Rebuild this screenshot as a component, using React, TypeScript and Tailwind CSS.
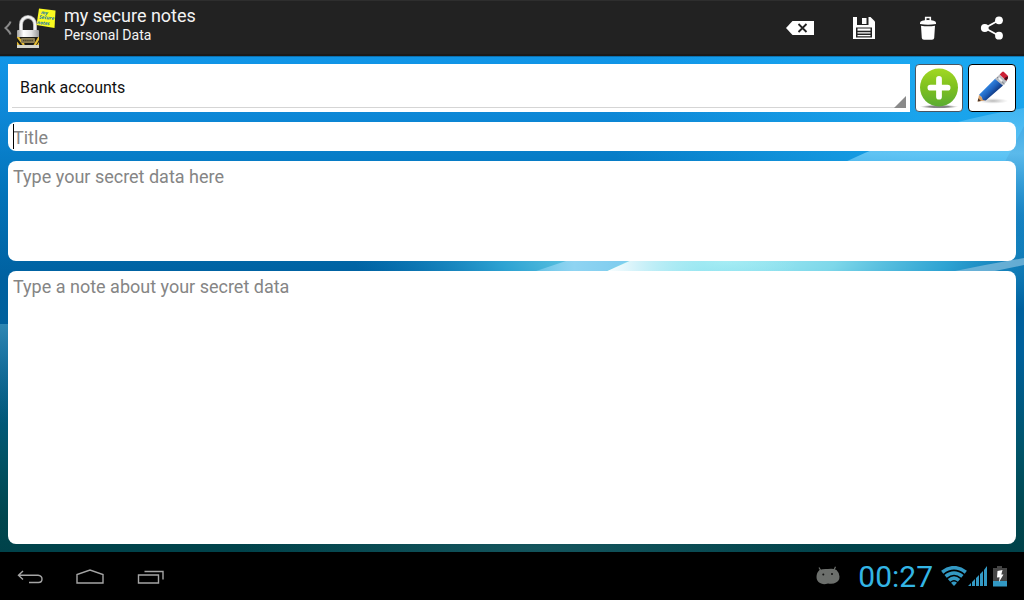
import { useState } from 'react';

const CATEGORIES = ['Bank accounts'];

function Wallpaper() {
  return (
    <svg
      className="absolute inset-0 w-full h-full"
      viewBox="0 0 1024 496"
      preserveAspectRatio="none"
      aria-hidden="true"
    >
      <defs>
        <linearGradient id="sky" x1="0" y1="0" x2="0" y2="1">
          <stop offset="0" stopColor="#1196e8" />
          <stop offset="0.12" stopColor="#0d87d6" />
          <stop offset="0.28" stopColor="#0273b9" />
          <stop offset="0.45" stopColor="#0061a0" />
          <stop offset="0.6" stopColor="#00609a" />
          <stop offset="0.8" stopColor="#015468" />
          <stop offset="0.93" stopColor="#01464e" />
          <stop offset="1" stopColor="#00424a" />
        </linearGradient>
        <radialGradient id="glow" gradientUnits="userSpaceOnUse" cx="0" cy="0" r="1" gradientTransform="translate(725 205) scale(370 80)">
          <stop offset="0" stopColor="#a8eef5" />
          <stop offset="0.3" stopColor="#8be4f1" stopOpacity="0.9" />
          <stop offset="0.6" stopColor="#3db8e2" stopOpacity="0.75" />
          <stop offset="1" stopColor="#1a90cc" stopOpacity="0" />
        </radialGradient>
        <linearGradient id="ray" x1="0" y1="0" x2="1" y2="0">
          <stop offset="0" stopColor="#fff" />
          <stop offset="0.15" stopColor="#d6f3fa" />
          <stop offset="0.5" stopColor="#a0eaf3" stopOpacity="0.5" />
          <stop offset="1" stopColor="#a0eaf3" stopOpacity="0" />
        </linearGradient>
        <linearGradient id="streak" x1="0" y1="0" x2="1" y2="0">
          <stop offset="0" stopColor="#8fd4f2" stopOpacity="0.5" />
          <stop offset="0.4" stopColor="#8fd4f2" />
          <stop offset="1" stopColor="#7ccbee" />
        </linearGradient>
        <linearGradient id="beam" x1="0" y1="0" x2="0" y2="1">
          <stop offset="0" stopColor="#6fcaf8" stopOpacity="0.45" />
          <stop offset="0.3" stopColor="#7fd4fa" stopOpacity="0.7" />
          <stop offset="1" stopColor="#2f9bd8" stopOpacity="0" />
        </linearGradient>
        <linearGradient id="topRight" x1="0" y1="0" x2="1" y2="0">
          <stop offset="0.6" stopColor="#1fb0f5" stopOpacity="0" />
          <stop offset="0.9" stopColor="#1fb0f5" stopOpacity="0.7" />
        </linearGradient>
        <linearGradient id="leftHaze" x1="0" y1="0" x2="0" y2="1">
          <stop offset="0" stopColor="#3e94bb" stopOpacity="0.75" />
          <stop offset="1" stopColor="#26708a" stopOpacity="0" />
        </linearGradient>
        <radialGradient id="floor">
          <stop offset="0" stopColor="#15565e" />
          <stop offset="1" stopColor="#15565e" stopOpacity="0" />
        </radialGradient>
      </defs>
      <rect width="1024" height="496" fill="url(#sky)" />
      <path d="M0 0 H1024 V70 L1000 115 H0 Z" fill="url(#topRight)" />
      <ellipse cx="725" cy="205" rx="370" ry="80" fill="url(#glow)" />
      <path d="M536 215 L572 203 L632 203 L606 215 Z" fill="url(#streak)" />
      <path d="M605 216 L634 203 L800 203 L790 216 Z" fill="url(#ray)" />
      <path d="M845 106 Q920 70 1024 52 L1024 203 H845 Z" fill="url(#beam)" />
      <path d="M950 216 L985 209 L1024 202 L1024 209 L990 216 Z" fill="#82bcdc" opacity="0.75" />
      <rect y="268" width="8" height="100" fill="url(#leftHaze)" />
      <rect width="1024" height="1" fill="#08588c" opacity="0.6" />
      <ellipse cx="540" cy="492" rx="300" ry="20" fill="url(#floor)" />
    </svg>
  );
}

function AppLogo() {
  return (
    <svg className="w-10 h-10" viewBox="0 0 40 40" aria-hidden="true">
      <defs>
        <linearGradient id="steel" x1="0" y1="0" x2="1" y2="0">
          <stop offset="0" stopColor="#a0a0a0" />
          <stop offset="0.3" stopColor="#ffffff" />
          <stop offset="0.65" stopColor="#e2e2e2" />
          <stop offset="1" stopColor="#999999" />
        </linearGradient>
        <clipPath id="plate">
          <rect x="1" y="29" width="22" height="8" />
        </clipPath>
      </defs>
      <path d="M5 23 V16.500 A7 7.600 0 0 1 19 16.500 V23" fill="none" stroke="#a8a8a8" strokeWidth="4" />
      <path d="M5 23 V16.500 A7 7.600 0 0 1 19 16.500 V23" fill="none" stroke="#f4f4f4" strokeWidth="2.400" />
      <rect x="1" y="22" width="22" height="18" rx="1" fill="url(#steel)" />
      <rect x="1" y="29" width="22" height="8" fill="#1b1a15" />
      <g clipPath="url(#plate)" stroke="#e3bc35" strokeWidth="2.2">
        <path d="M0 34 L5 40 M1 28 L8 37 M17 40 L24 28 M20 40 L25 33" />
      </g>
      <rect x="5" y="30" width="14" height="5" rx="1" fill="#8b7d52" />
      <path d="M7 32.5 H17" stroke="#4c4530" strokeWidth="1.6" strokeDasharray="1.5 0.6" />
      <rect x="1" y="37" width="22" height="3" fill="#d6d6cc" />
      <path d="M23 0.5 L39.500 2.500 L38.500 20 L20.500 17 Z" fill="#fbfb20" />
      <g
        fill="#1675a8"
        fontFamily="'Open Sans', sans-serif"
        fontWeight="bold"
        fontStyle="italic"
        fontSize="4.800"
      >
        <text x="25" y="6" transform="rotate(6 25 6)">my</text>
        <text x="23" y="10.500" transform="rotate(6 23 10.5)">Secure</text>
        <text x="21" y="16" transform="rotate(6 21 16)">notes</text>
      </g>
    </svg>
  );
}

const actions = [
  {
    label: 'Clear',
    icon: (
      <>
        <path d="M2 16 L8.500 9 H30 V23 H8.500 Z" fill="#fff" />
        <path d="M14.500 12 L22.500 20 M22.500 12 L14.500 20" stroke="#222" strokeWidth="1.800" />
      </>
    ),
  },
  {
    label: 'Save',
    icon: (
      <>
        <path d="M5 5 H22.500 L27 9.500 V27 H5 Z" fill="#fff" />
        <path d="M9 5 H20.500 V13 H9 Z" fill="#222" />
        <path d="M14 6 H18.500 V12 H14 Z" fill="#fff" />
        <path d="M8 15.500 H24 V25.500 H8 Z" fill="#222" />
        <path d="M9.500 16.500 H22.500 V18.700 H9.500 Z" fill="#fff" />
        <path d="M9.500 20.800 H22.500 M9.500 23.600 H22.500" stroke="#fff" strokeWidth="1.200" />
      </>
    ),
  },
  {
    label: 'Delete',
    icon: (
      <>
        <path d="M13.700 9 V5.500 H18.300 V9" fill="none" stroke="#fff" strokeWidth="1.600" />
        <path d="M8 10.500 Q8.500 8 16 8 Q23.500 8 24 10.500 V12 Q16 13.500 8 12 Z" fill="#fff" />
        <path d="M9 13.700 Q16 15 23 13.700 L22.200 26 Q22 27.500 20 27.700 H12 Q10 27.500 9.800 26 Z" fill="#fff" />
      </>
    ),
  },
  {
    label: 'Share',
    icon: (
      <>
        <path d="M23 8.300 L8.800 16 L23 23.700" fill="none" stroke="#fff" strokeWidth="1.800" />
        <circle cx="23" cy="8.300" r="3.900" fill="#fff" />
        <circle cx="8.800" cy="16" r="3.900" fill="#fff" />
        <circle cx="23" cy="23.700" r="3.900" fill="#fff" />
      </>
    ),
  },
];

function ActionBar() {
  return (
    <header className="h-14 shrink-0 flex items-center justify-between bg-[#222222] border-t border-t-[#2e2e2e] border-b-2 border-b-[#1a1a1a]">
      <button aria-label="Navigate up" className="flex items-center h-full pl-1 gap-1">
        <svg className="w-2 h-4" viewBox="0 0 8 16" fill="none" stroke="#8a8a8a" strokeWidth="2">
          <path d="M6.500 1.500 Q6 4 1.500 8 Q6 12 6.500 14.500" />
        </svg>
        <AppLogo />
        <span className="flex flex-col pl-1 pb-1.5 text-left text-[#f3f3f3]">
          <span className="text-lg leading-5">my secure notes</span>
          <span className="text-sm leading-[18px]">Personal Data</span>
        </span>
      </button>
      <div className="flex h-full">
        {actions.map((action) => (
          <button key={action.label} aria-label={action.label} className="w-16 h-full flex items-center justify-center">
            <svg className="w-8 h-8" viewBox="0 0 32 32">{action.icon}</svg>
          </button>
        ))}
      </div>
    </header>
  );
}

function PlusIcon() {
  return (
    <svg className="w-full h-full" viewBox="0 0 48 48">
      <defs>
        <linearGradient id="green" x1="0" y1="0" x2="0" y2="1">
          <stop offset="0" stopColor="#a2d823" />
          <stop offset="0.5" stopColor="#7ec01f" />
          <stop offset="1" stopColor="#5aac32" />
        </linearGradient>
        <radialGradient id="plusShadow">
          <stop offset="0.5" stopColor="#777" stopOpacity="0.9" />
          <stop offset="1" stopColor="#999" stopOpacity="0" />
        </radialGradient>
      </defs>
      <ellipse cx="24" cy="43.500" rx="20" ry="2" fill="url(#plusShadow)" />
      <circle cx="24" cy="23.500" r="19.800" fill="url(#green)" />
      <path d="M24 14.500 V33 M15 23.700 H33" stroke="#fff" strokeWidth="6" strokeLinecap="round" />
    </svg>
  );
}

function PencilIcon() {
  return (
    <svg className="w-full h-full" viewBox="0 0 48 48">
      <defs>
        <linearGradient id="body" gradientUnits="userSpaceOnUse" x1="17" y1="25" x2="24" y2="32">
          <stop offset="0" stopColor="#2f80dc" />
          <stop offset="0.5" stopColor="#1f62bd" />
          <stop offset="1" stopColor="#123b85" />
        </linearGradient>
        <radialGradient id="pencilShadow">
          <stop offset="0" stopColor="#888" stopOpacity="0.6" />
          <stop offset="1" stopColor="#aaa" stopOpacity="0" />
        </radialGradient>
      </defs>
      <ellipse cx="25" cy="37.500" rx="16" ry="3" fill="url(#pencilShadow)" />
      <path d="M9 38 L10.500 31 L17 37 Z" fill="#d9a066" />
      <path d="M9 38 L9.700 34.800 L12.500 37.500 Z" fill="#4d3627" />
      <path d="M10.500 31 L27.500 14 L35.500 21.500 L17.500 37 L14.500 36.500 L13.300 33.500 Z" fill="url(#body)" />
      <path d="M27 14.500 L32 9.800 L39.500 17 L35.500 21.500 Z" fill="#b9bcc2" />
      <path d="M29.300 12.800 L37 19.800" stroke="#747880" strokeWidth="1" />
      <path d="M31 13.500 L34.500 17" stroke="#f4f4f4" strokeWidth="2" />
      <path d="M32 9.800 L34.500 7.300 Q35.500 6.500 36.500 7.300 L40.500 11.200 Q41.300 12.500 40.500 13.700 L39 16.500 Z" fill="#cc2036" />
      <path d="M38.500 12.500 L40.700 12 L40.500 14 L39 16.500 L36.500 14.500 Z" fill="#4a1220" />
    </svg>
  );
}

function CategoryRow() {
  const [category, setCategory] = useState(CATEGORIES[0]);

  return (
    <div className="flex gap-[5px] h-12 shrink-0">
      <div className="relative flex-1 bg-white">
        <select
          aria-label="Category"
          value={category}
          onChange={(e) => setCategory(e.target.value)}
          className="appearance-none w-full h-full pl-3 pr-5 bg-transparent text-base text-[#111] outline-none"
        >
          {CATEGORIES.map((name) => (
            <option key={name} value={name}>{name}</option>
          ))}
        </select>
        <span className="absolute left-1 right-1 bottom-1 h-px bg-[#d5d5d5] pointer-events-none" />
        <svg className="absolute right-1 bottom-1 w-3 h-3 pointer-events-none" viewBox="0 0 12 12">
          <path d="M12 0 V12 H0 Z" fill="#8a8a8a" />
        </svg>
      </div>
      <button aria-label="Add category" className="w-12 h-12 rounded border border-[#4a5560] bg-white">
        <PlusIcon />
      </button>
      <button aria-label="Edit category" className="w-12 h-12 rounded border border-black bg-white">
        <PencilIcon />
      </button>
    </div>
  );
}

function StatusIcons() {
  return (
    <div className="flex items-center">
      <svg className="w-[26px] h-5" viewBox="0 0 26 20" fill="none" stroke="#3399c4" strokeWidth="3.600">
        <path d="M1.200 6.200 Q13 -2.800 24.800 6.200" />
        <path d="M4.600 10.300 Q13 3.700 21.400 10.300" />
        <path d="M8 14.300 Q13 10 18 14.300" />
        <path d="M10 16.800 Q13 14 16 16.800 L13 20 Z" fill="#3399c4" stroke="none" />
      </svg>
      <svg className="w-5 h-[22px] ml-px mr-1" viewBox="0 0 20 22" fill="#3399c4">
        <path d="M0 21 L3 18 V21 Z M4 17 L7 14 V21 H4 Z M8 13 L11 10 V21 H8 Z M12 9 L15 6 V21 H12 Z M16 5 L19 1 V21 H16 Z" />
      </svg>
      <svg className="w-4 h-[22px]" viewBox="0 0 16 22">
        <path d="M1 3 H5 V1 H10 V3 H15 V16 H1 Z" fill="#454545" />
        <path d="M1 16 H15 V21.500 H1 Z" fill="#3399c4" />
        <path d="M5.500 6 L10.500 5 L9.300 9.500 L11.500 9.500 L7 17 L7.600 12.300 L5 12.500 Z" fill="#fff" />
      </svg>
    </div>
  );
}

function SystemBar() {
  return (
    <footer className="h-12 shrink-0 flex items-center justify-between bg-black">
      <nav className="flex">
        <button aria-label="Back" className="w-[60px] h-12 flex items-center justify-center">
          <svg className="w-7 h-5" viewBox="0 0 28 20" fill="none" stroke="#a5a5a5" strokeWidth="1.400">
            <path d="M7 5 L2.500 9.300 L7 13.500 M2.500 9.300 H22 Q26 9.800 26 13 Q26 16.500 22.500 16.500 H13" />
          </svg>
        </button>
        <button aria-label="Home" className="w-[60px] h-12 flex items-center justify-center">
          <svg className="w-7 h-5" viewBox="0 0 28 20" fill="none" stroke="#a5a5a5" strokeWidth="1.400">
            <path d="M1 17 V8.500 L14 4 L27 8.500 V17 Z" />
          </svg>
        </button>
        <button aria-label="Recent apps" className="w-[60px] h-12 flex items-center justify-center">
          <svg className="w-7 h-5" viewBox="0 0 28 20" fill="none" stroke="#a5a5a5" strokeWidth="1.400">
            <path d="M2.500 9 H22.500 V17 H2.500 Z" />
            <path d="M8.500 5.500 H27 V13.500" />
          </svg>
        </button>
      </nav>
      <div className="flex items-center pr-4">
        <svg className="w-6 h-5 mr-[18px]" viewBox="0 0 24 20">
          <path
            d="M3.500 4 Q7 2.500 12 3 Q17 2 20.500 4 Q23.500 7 23.500 10.500 Q23.500 15 20 16.500 Q17 18.500 12 17.500 Q7 19 4 17 Q0.500 15 0.500 11 Q0.500 6.500 3.500 4 Z"
            fill="#6c6f6c"
          />
          <path d="M5 5 L3 1.500 M18 4 L19.500 0.800" stroke="#6c6f6c" strokeWidth="1.200" />
          <circle cx="7.300" cy="8.500" r="1" fill="#111" />
          <circle cx="16" cy="8" r="1" fill="#111" />
        </svg>
        <time className="mr-2 pt-0.5 text-[30px] leading-9 text-[#33b5e5]">00:27</time>
        <StatusIcons />
      </div>
    </footer>
  );
}

export default function App() {
  const [title, setTitle] = useState('');
  const [secret, setSecret] = useState('');
  const [note, setNote] = useState('');

  return (
    <div className="h-screen flex flex-col bg-black font-['Roboto',sans-serif]">
      <ActionBar />

      <main className="relative flex-1 min-h-0">
        <Wallpaper />
        <div className="relative h-full flex flex-col gap-2.5 p-2">
          <CategoryRow />

          <div className="relative h-[29px] shrink-0">
            <input
              type="text"
              aria-label="Title"
              placeholder="Title"
              value={title}
              onChange={(e) => setTitle(e.target.value)}
              className="block w-full h-full px-[5px] pt-0.5 rounded-lg bg-white text-lg text-[#111] placeholder:text-[#858585] outline-none"
            />
            {/* Text cursor */}
            {!title && <span className="absolute left-[5px] top-0.5 w-px h-[25px] bg-black pointer-events-none" />}
          </div>

          <textarea
            aria-label="Secret data"
            placeholder="Type your secret data here"
            value={secret}
            onChange={(e) => setSecret(e.target.value)}
            className="block w-full h-[100px] shrink-0 px-[5px] py-0.5 rounded-lg bg-white text-lg text-[#111] placeholder:text-[#858585] outline-none resize-none"
          />

          <textarea
            aria-label="Note"
            placeholder="Type a note about your secret data"
            value={note}
            onChange={(e) => setNote(e.target.value)}
            className="block w-full flex-1 min-h-0 px-[5px] py-0.5 rounded-lg bg-white text-lg text-[#111] placeholder:text-[#858585] outline-none resize-none"
          />
        </div>
      </main>

      <SystemBar />
    </div>
  );
}
